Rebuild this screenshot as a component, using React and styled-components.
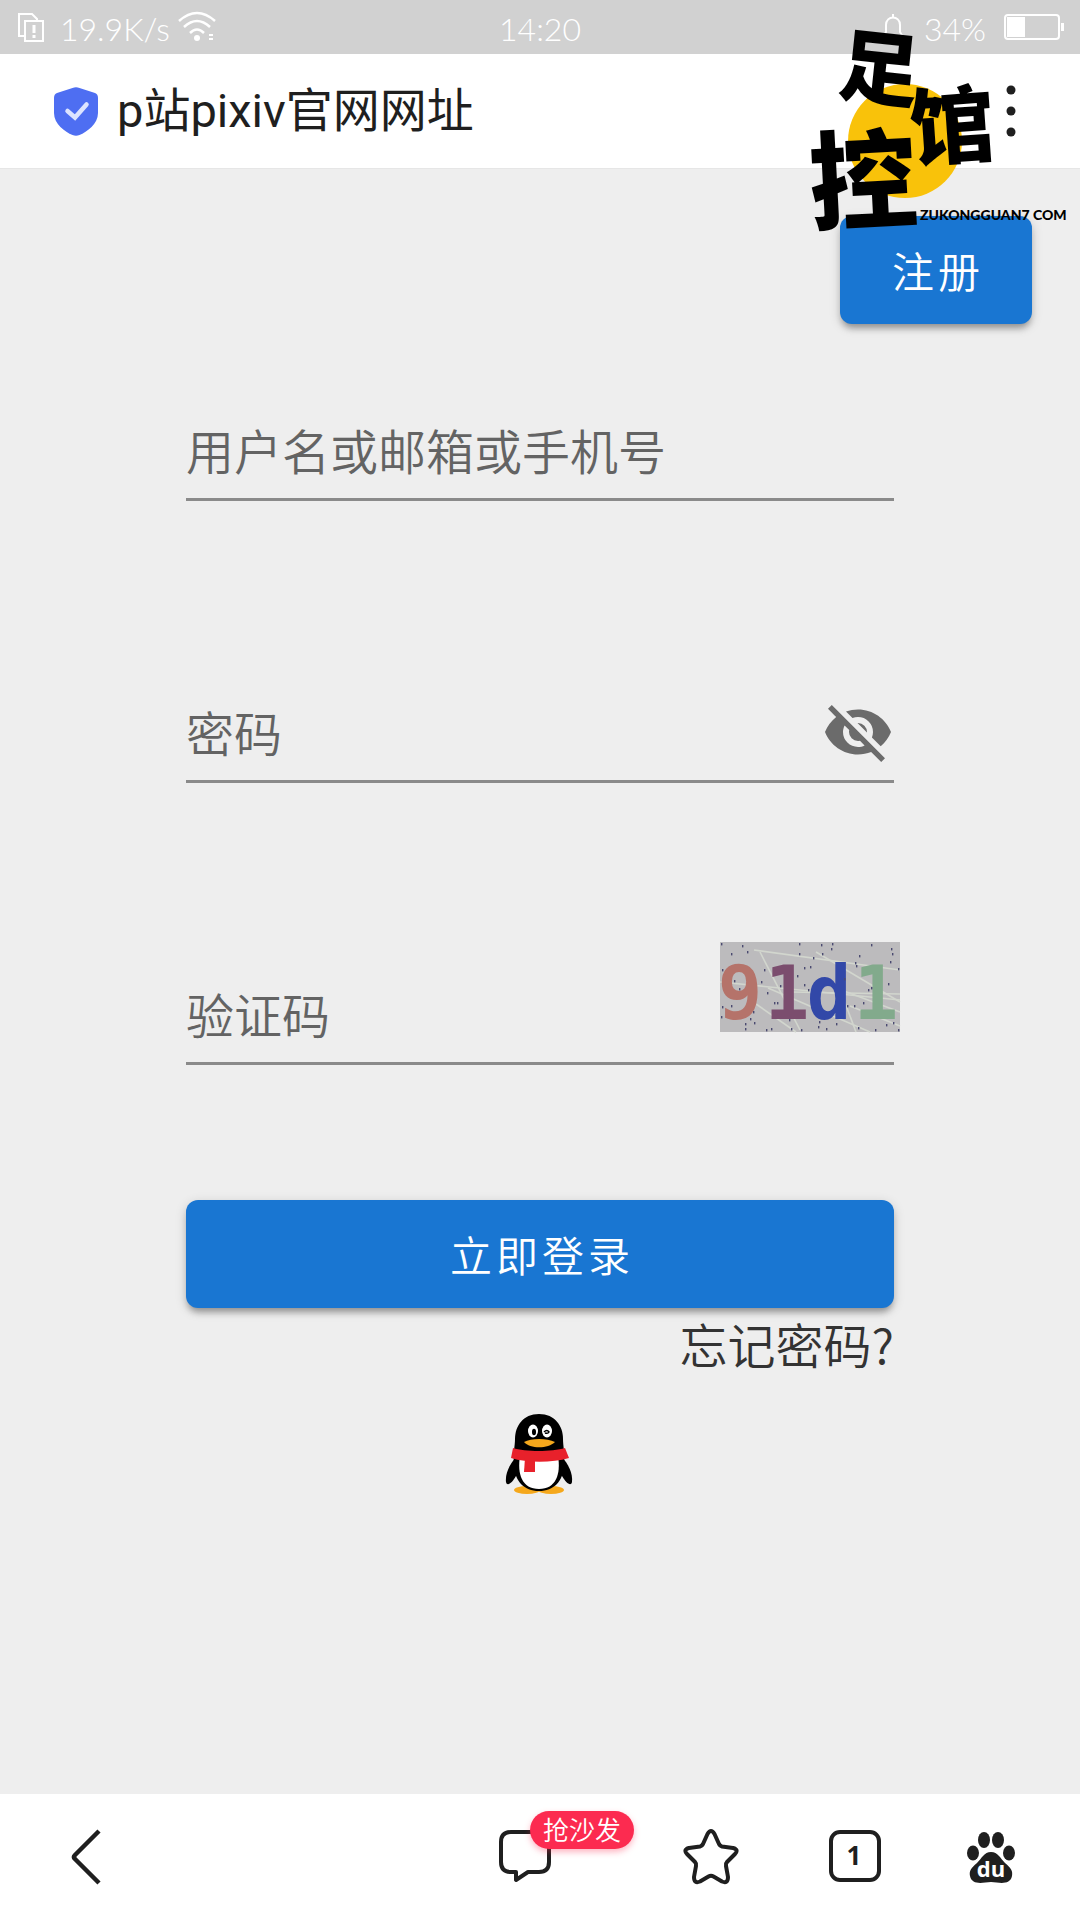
import React, { Component } from 'react'
import styled, { createGlobalStyle } from 'styled-components'

const GlobalStyle = createGlobalStyle`
  * {
    box-sizing: border-box;
  }
  body {
    margin: 0;
    background: #eeeeee;
    font-family: Roboto, "Noto Sans CJK SC", sans-serif;
  }
  button, input {
    font-family: inherit;
  }
  svg {
    overflow: visible;
  }
`

const Page = styled.div`
  position: relative;
  display: flex;
  flex-direction: column;
  min-height: 100vh;
  background: #eeeeee;
`

/* Status bar */

const StatusBar = styled.div`
  display: grid;
  grid-template-columns: 1fr auto 1fr;
  align-items: center;
  height: 54px;
  padding: 4px 16px 0 16px;
  background: #d1d1d1;
  color: #ffffff;
  font-family: Lato, "Noto Sans CJK SC", sans-serif;
  font-size: 32px;
  font-weight: 300;
  line-height: 40px;
`

const StatusGroup = styled.div`
  display: flex;
  align-items: center;
  justify-content: ${props => props.$end ? 'flex-end' : 'flex-start'};
  gap: ${props => props.$gap}px;
`

const StatusIcon = styled.svg`
  display: block;
  margin-bottom: 4px;
`

/* Browser title bar */

const TitleBar = styled.header`
  display: flex;
  align-items: center;
  height: 115px;
  padding: 0 48px 0 52px;
  background: #ffffff;
  border-bottom: 1px solid #e6e6e6;
`

const Title = styled.h1`
  flex: 1;
  margin: 0 0 0 17px;
  color: #1f1f1f;
  font-size: 47px;
  font-weight: 400;
  line-height: 72px;
`

const IconButton = styled.button`
  position: relative;
  display: flex;
  align-items: center;
  justify-content: center;
  padding: 0;
  border: none;
  background: none;
  color: #1f1f1f;
  cursor: pointer;
`

/* Login page */

const Main = styled.main`
  flex: 1;
`

const TopRow = styled.div`
  display: flex;
  justify-content: flex-end;
  padding: 47px 48px 0;
`

const Button = styled.button`
  width: ${props => props.$block ? '100%' : 'auto'};
  min-width: 192px;
  height: 108px;
  padding: 0 46px 2px 50px;
  border: none;
  border-radius: 12px;
  background: #1976d2;
  box-shadow: 0 6px 6px -2px rgba(0, 0, 0, 0.3), 0 3px 12px rgba(0, 0, 0, 0.16);
  color: #ffffff;
  font-size: 42px;
  font-weight: 350;
  letter-spacing: 4px;
  cursor: pointer;
`

const Form = styled.form`
  display: flex;
  flex-direction: column;
  padding: 51px 186px 0;
`

const Fields = styled.div`
  display: flex;
  flex-direction: column;
  gap: 156px;
  margin-bottom: 135px;
`

const Field = styled.div`
  display: flex;
  align-items: flex-end;
  height: 126px;
  border-bottom: 3px solid #8a8a8a;
`

const Input = styled.input`
  flex: 1;
  min-width: 0;
  height: 96px;
  padding: 6px 0 0;
  border: none;
  outline: none;
  background: transparent;
  color: #333333;
  font-size: 48px;
  font-weight: 350;
  &::placeholder {
    color: #636363;
    opacity: 1;
  }
`

const EyeButton = styled(IconButton)`
  height: 96px;
  color: #6b6b6b;
`

const CaptchaButton = styled(IconButton)`
  margin: 0 -6px 30px 0;
`

const ForgotLink = styled.a`
  align-self: flex-end;
  color: #333333;
  font-family: "Noto Sans CJK SC", sans-serif;
  font-size: 48px;
  font-weight: 350;
  line-height: 70px;
  text-decoration: none;
`

const QQButton = styled(IconButton)`
  align-self: center;
  margin-top: 32px;
`

/* Bottom bar */

const NavBar = styled.nav`
  display: grid;
  grid-template-columns: 172fr 260fr 186fr 186fr 102fr 170fr;
  height: 126px;
  padding-right: 4px;
  background: #ffffff;
`

const NavButton = styled(IconButton)`
  grid-column: ${props => props.$column};
`

const Badge = styled.span`
  position: absolute;
  top: 17px;
  left: calc(50% + 5px);
  padding: 2px 13px 0;
  border-radius: 19px;
  background: #fc2b50;
  box-shadow: 0 3px 6px rgba(252, 43, 80, 0.35);
  color: #ffffff;
  font-size: 26px;
  font-weight: 350;
  line-height: 36px;
  white-space: nowrap;
`

const Watermark = styled.svg`
  position: absolute;
  top: 0;
  right: 0;
  pointer-events: none;
`

const captchaLetters = [
  { char: '9', x: 20, color: '#b5736a' },
  { char: '1', x: 67, color: '#7b4d6e' },
  { char: 'd', x: 109, color: '#3248a8' },
  { char: '1', x: 156, color: '#82aa8c' }
]

const captchaLines = [
  'M34 8L180 28', 'M0 40L180 58', 'M40 10L80 88', 'M96 10L180 60', 'M36 62L76 90',
  'M48 46L150 90', 'M124 58L136 90', 'M70 50L180 52', 'M130 64L180 84', 'M100 40L180 70'
]

const captchaDots = [
  [1, 1], [22, 3], [27, 9], [11, 11], [79, 1], [101, 2], [111, 6], [112, 1], [151, 2], [171, 6],
  [172, 11], [102, 11], [93, 15], [79, 11], [139, 13], [2, 27], [44, 27], [84, 25], [90, 24],
  [77, 33], [135, 20], [136, 23], [170, 19], [178, 26], [124, 36], [14, 38], [19, 46], [41, 39],
  [47, 50], [60, 43], [84, 42], [88, 47], [148, 47], [151, 45], [168, 41], [127, 63], [134, 63],
  [143, 60], [54, 60], [57, 60], [11, 63], [1, 74], [2, 64], [33, 69], [30, 76], [34, 80],
  [25, 81], [25, 86], [46, 87], [51, 86], [69, 77], [71, 86], [81, 87], [98, 84], [99, 79],
  [106, 86], [116, 81], [138, 85], [166, 82], [173, 80], [178, 87], [155, 87]
]

const CaptchaImage = () => (
  <svg width="180" height="90" viewBox="0 0 180 90" role="img" aria-label="91d1">
    <rect width="180" height="90" fill="#bcbbbd" />
    {captchaLines.map(d => <path key={d} d={d} stroke="#d2d6ce" strokeWidth="1.6" fill="none" />)}
    {captchaLetters.map(letter => (
      <text key={letter.x} x={letter.x} y="77" textAnchor="middle" fill={letter.color} fontFamily="DejaVu Sans Mono, monospace" fontWeight="700" fontSize="74">{letter.char}</text>
    ))}
    {captchaDots.map(([x, y]) => <rect key={`${x}-${y}`} x={x} y={y} width="1.4" height="2.4" fill="#4a4a70" />)}
  </svg>
)

const Penguin = () => (
  <svg width="80" height="88" viewBox="0 0 80 88">
    <ellipse cx="27" cy="80" rx="13" ry="4" fill="#f5a81c" />
    <ellipse cx="51" cy="80" rx="13" ry="4" fill="#f5a81c" />
    <path d="M16 47C10 54 5 63 6 72C7 77 12 73 16 66Z" fill="#000" />
    <path d="M62 47C68 54 73 63 72 72C71 77 66 73 62 66Z" fill="#000" />
    <path d="M39 4C23 4 15 16 15 29C15 36 13 42 14 56C15 71 24 81 39 81C54 81 63 71 64 56C65 42 63 36 63 29C63 16 55 4 39 4Z" fill="#000" />
    <path d="M20 46H58C61 64 56 79 39 79C22 79 17 64 20 46Z" fill="#fff" />
    <path d="M13 38C25 42 52 42 65 38L69 48C52 53 27 53 11 48Z" fill="#e8212b" />
    <path d="M25 48H35V62H24Z" fill="#e8212b" />
    <ellipse cx="33" cy="21" rx="5" ry="6.500" fill="#fff" />
    <ellipse cx="47" cy="21" rx="5" ry="6.500" fill="#fff" />
    <ellipse cx="34" cy="22" rx="2" ry="3.200" fill="#000" />
    <path d="M44 22Q47 19 49 22Q48 24 45 23" stroke="#000" strokeWidth="1.500" fill="none" />
    <path d="M24 32C31 28 47 28 55 32C48 39 30 39 24 32Z" fill="#f5a81c" />
  </svg>
)

class LoginPage extends Component {

  state = {
    username: '',
    password: '',
    captcha: '',
    showPassword: false
  }

  onChange = event => {
    this.setState({ [event.target.name]: event.target.value })
  }

  togglePassword = () => {
    this.setState({ showPassword: !this.state.showPassword })
  }

  render() {
    return (
      <Main>
        <TopRow>
          <Button type="button">注册</Button>
        </TopRow>

        <Form onSubmit={event => event.preventDefault()}>
          <Fields>
            <Field>
              <Input type="text" name="username" aria-label="用户名或邮箱或手机号" placeholder="用户名或邮箱或手机号" value={this.state.username} onChange={this.onChange} />
            </Field>
            <Field>
              <Input type={this.state.showPassword ? 'text' : 'password'} name="password" aria-label="密码" placeholder="密码" value={this.state.password} onChange={this.onChange} />
              <EyeButton type="button" aria-label="显示密码" onClick={this.togglePassword}>
                <svg width="72" height="72" viewBox="0 0 24 24" fill="currentColor">
                  <path d="M11.83,9L15,12.16C15,12.11 15,12.05 15,12A3,3 0 0,0 12,9C11.94,9 11.89,9 11.83,9M7.53,9.8L9.08,11.35C9.03,11.56 9,11.77 9,12A3,3 0 0,0 12,15C12.22,15 12.44,14.97 12.65,14.92L14.2,16.47C13.53,16.8 12.79,17 12,17A5,5 0 0,1 7,12C7,11.21 7.2,10.47 7.53,9.8M2,4.27L4.28,6.55L4.73,7C3.08,8.3 1.78,10 1,12C2.73,16.39 7,19.5 12,19.5C13.55,19.5 15.03,19.2 16.38,18.66L16.81,19.08L19.73,22L21,20.73L3.27,3M12,7A5,5 0 0,1 17,12C17,12.64 16.87,13.26 16.64,13.82L19.57,16.75C21.07,15.5 22.27,13.86 23,12C21.27,7.61 17,4.5 12,4.5C10.6,4.5 9.26,4.75 8,5.2L10.17,7.35C10.74,7.13 11.35,7 12,7Z" />
                </svg>
              </EyeButton>
            </Field>
            <Field>
              <Input type="text" name="captcha" aria-label="验证码" placeholder="验证码" value={this.state.captcha} onChange={this.onChange} />
              <CaptchaButton type="button" aria-label="刷新验证码">
                <CaptchaImage />
              </CaptchaButton>
            </Field>
          </Fields>

          <Button type="submit" $block>立即登录</Button>
          <ForgotLink href="#">忘记密码?</ForgotLink>
          <QQButton type="button" aria-label="QQ登录">
            <Penguin />
          </QQButton>
        </Form>
      </Main>
    )
  }

}

const App = () => (
  <Page>
    <GlobalStyle />

    <StatusBar>
      <StatusGroup $gap={14}>
        <StatusIcon width="30" height="32" viewBox="0 0 30 32" fill="none" stroke="#fff" strokeWidth="2">
          <path d="M8 25H3V3H16L21 8V9" />
          <rect x="9" y="10" width="18" height="20" />
          <path d="M18 14V22M18 24V27" strokeWidth="3" />
        </StatusIcon>
        <StatusGroup $gap={8}>
          <span>19.9K/s</span>
          <StatusIcon width="38" height="32" viewBox="0 0 38 32" fill="none" stroke="#fff" strokeWidth="2.500">
            <path d="M1 10Q19 -6 37 10M6 16Q19 4 32 16M12 22Q19 15 26 22" />
            <circle cx="19" cy="27" r="3" fill="#fff" stroke="none" />
            <path d="M31 24H35M31 28H35" strokeWidth="2" />
          </StatusIcon>
        </StatusGroup>
      </StatusGroup>
      <span>14:20</span>
      <StatusGroup $end $gap={18}>
        <StatusIcon width="26" height="30" viewBox="0 0 26 30" fill="none" stroke="#fff" strokeWidth="2">
          <path d="M13 2V5M3 25H23L20 20V13C20 3 6 3 6 13V20ZM10 28H16" />
        </StatusIcon>
        <span>34%</span>
        <StatusIcon width="60" height="28" viewBox="0 0 60 28">
          <rect x="1" y="2" width="54" height="24" rx="3" fill="none" stroke="#fff" strokeWidth="2" />
          <rect x="3" y="4" width="18" height="20" fill="#fff" />
          <rect x="57" y="10" width="3" height="8" fill="#fff" />
        </StatusIcon>
      </StatusGroup>
    </StatusBar>

    <TitleBar>
      <svg width="48" height="50" viewBox="0 0 48 50">
        <path d="M20.500 2Q24 .5 27.500 2L43 7Q46 8.200 46 12V27C46 38 35 46 27.500 49Q24 50.500 20.500 49C13 46 2 38 2 27V12Q2 8.200 5 7Z" fill="#4e6ef2" />
        <path d="M15.500 25L23 31.500L34.500 18.500" fill="none" stroke="#dce3ff" strokeWidth="4.500" strokeLinecap="round" />
      </svg>
      <Title>p站pixiv官网网址</Title>
      <IconButton type="button" aria-label="菜单">
        <svg width="42" height="60" viewBox="0 0 42 60" fill="currentColor">
          <circle cx="21" cy="9" r="4.500" />
          <circle cx="21" cy="30" r="4.500" />
          <circle cx="21" cy="51" r="4.500" />
        </svg>
      </IconButton>
    </TitleBar>

    <LoginPage />

    <NavBar>
      <NavButton type="button" $column={1} aria-label="返回">
        <svg width="60" height="60" viewBox="0 0 60 60" fill="none" stroke="currentColor" strokeWidth="4.500" strokeLinejoin="round">
          <path d="M43 4L19 28Q17 30 19 32L43 56" />
        </svg>
      </NavButton>
      <NavButton type="button" $column={3} aria-label="评论">
        <svg width="60" height="60" viewBox="0 0 60 60" fill="none" stroke="currentColor" strokeWidth="4" strokeLinejoin="round">
          <path d="M16 5H44Q54 5 54 15V35Q54 45 44 45H33L21 53V45H16Q6 45 6 35V15Q6 5 16 5Z" />
        </svg>
        <Badge>抢沙发</Badge>
      </NavButton>
      <NavButton type="button" $column={4} aria-label="收藏">
        <svg width="60" height="60" viewBox="0 0 60 60" fill="none" stroke="currentColor" strokeWidth="4" strokeLinejoin="round">
          <path d="M26.500 7Q30 1 33.500 7L38 17Q39 19 41 19.500L52 21Q58 22.500 54 27L46 35Q44.500 36.500 45 39L47 50Q47 57 41 54.500L32.500 49.500Q30 48 27.500 49.500L19 54.500Q13 57 13 50L15 39Q15.500 36.500 14 35L6 27Q2 22.500 8 21L19 19.500Q21 19 22 17Z" />
        </svg>
      </NavButton>
      <NavButton type="button" $column={5} aria-label="标签页">
        <svg width="60" height="60" viewBox="0 0 60 60">
          <rect x="6" y="5" width="48" height="48" rx="9" fill="none" stroke="currentColor" strokeWidth="4" />
          <text x="29" y="38" textAnchor="middle" fill="currentColor" fontFamily="Open Sans, sans-serif" fontSize="26" fontWeight="700">1</text>
        </svg>
      </NavButton>
      <NavButton type="button" $column={6} aria-label="首页">
        <svg width="60" height="60" viewBox="0 0 60 60" fill="currentColor">
          <ellipse cx="12" cy="26" rx="6" ry="7.500" />
          <ellipse cx="23" cy="13" rx="6" ry="8" />
          <ellipse cx="37" cy="13" rx="6" ry="8" />
          <ellipse cx="48" cy="26" rx="6" ry="7.500" />
          <path d="M30 25C37 25 39 31 44 36C50 41 52 44 51 49C49 58 40 56 30 55C20 56 11 58 9 49C8 44 10 41 16 36C21 31 23 25 30 25Z" />
          <text x="30" y="50" textAnchor="middle" fill="#fff" fontFamily="Open Sans, sans-serif" fontSize="22" fontWeight="700">du</text>
        </svg>
      </NavButton>
    </NavBar>

    <Watermark width="280" height="240" viewBox="800 0 280 240" fontFamily="Noto Sans CJK SC, sans-serif" fontWeight="900">
      <circle cx="905" cy="141" r="57" fill="#f9c20a" />
      <text x="840" y="98" fontSize="80" transform="rotate(6 880 60)">足</text>
      <text x="910" y="157" fontSize="84" transform="rotate(-4 950 125)">馆</text>
      <text x="809" y="221" fontSize="108" transform="rotate(-3 860 180)">控</text>
      <text x="920" y="220" fontSize="14" fontFamily="Lato, sans-serif">ZUKONGGUAN7 COM</text>
    </Watermark>
  </Page>
)

export default App
